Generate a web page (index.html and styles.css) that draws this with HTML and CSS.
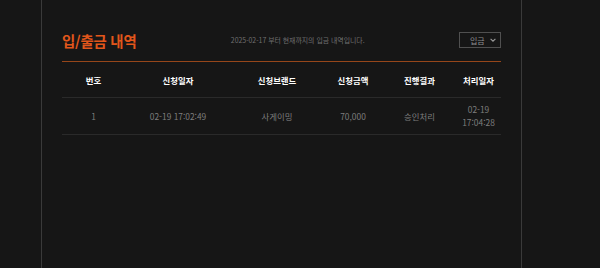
FILE: index.html
```html
<!DOCTYPE html>
<html lang="ko">
<head>
  <meta charset="utf-8">
  <title>입/출금 내역</title>
  <link rel="stylesheet" href="styles.css">
</head>
<body>
  <div class="wrap">
    <div class="head">
      <h2 class="title">입/출금 내역</h2>
      <p class="desc">2025-02-17 부터 현재까지의 입금 내역입니다.</p>
      <div class="select">
        <span>입금</span>
        <svg width="6" height="4" viewBox="0 0 6 4"><path d="M0.6 0.8 L3 3.2 L5.4 0.8" fill="none" stroke="#9a9a9a" stroke-width="1.1"/></svg>
      </div>
    </div>

    <table class="list">
      <colgroup>
        <col class="c-no">
        <col class="c-date">
        <col class="c-brand">
        <col class="c-amount">
        <col class="c-result">
        <col class="c-done">
      </colgroup>
      <thead>
        <tr>
          <th>번호</th>
          <th>신청일자</th>
          <th>신청브랜드</th>
          <th>신청금액</th>
          <th>진행결과</th>
          <th>처리일자</th>
        </tr>
      </thead>
      <tbody>
        <tr>
          <td>1</td>
          <td>02-19 17:02:49</td>
          <td>사게이밍</td>
          <td>70,000</td>
          <td>승인처리</td>
          <td>02-19<br>17:04:28</td>
        </tr>
      </tbody>
    </table>
  </div>
</body>
</html>
```

FILE: styles.css
```css
html, body {
  margin: 0;
  height: 100%;
  background: #161616;
}
body {
  font-family: "Noto Sans CJK KR", "Noto Sans", sans-serif;
  overflow: hidden;
}
.wrap {
  width: 481px;
  min-height: 100%;
  margin-left: 41px;
  padding: 24px 20px 0 20px;
  border-left: 1px solid #3a3a3a;
  border-right: 1px solid #3a3a3a;
  box-sizing: border-box;
}
.head {
  display: flex;
  align-items: center;
  justify-content: space-between;
  height: 32px;
  margin-bottom: 5px;
}
.title {
  margin: 0;
  font-size: 14.4px;
  font-weight: bold;
  color: #e2561b;
  letter-spacing: -0.2px;
}
.desc {
  margin: 0;
  font-size: 6.9px;
  color: #707070;
}
.select {
  display: flex;
  align-items: center;
  justify-content: space-between;
  box-sizing: border-box;
  width: 42px;
  height: 16px;
  padding: 0 4px 0 10px;
  border: 1px solid #505050;
  font-size: 8px;
  color: #8e8e8e;
}
.list {
  width: 100%;
  border-collapse: collapse;
  table-layout: fixed;
  border-top: 1px solid #96461a;
  font-size: 8.4px;
}
.c-no { width: 63px; }
.c-date { width: 106px; }
.c-brand { width: 92px; }
.c-amount { width: 60px; }
.c-result { width: 73px; }
.c-done { width: 45px; }
.list th {
  height: 35px;
  padding: 0;
  color: #fff;
  font-weight: bold;
  border-bottom: 1px solid #2a2a2a;
}
.list td {
  height: 36px;
  padding: 0;
  text-align: center;
  color: #7e7e7e;
  line-height: 13px;
  border-bottom: 1px solid #2a2a2a;
}
```
